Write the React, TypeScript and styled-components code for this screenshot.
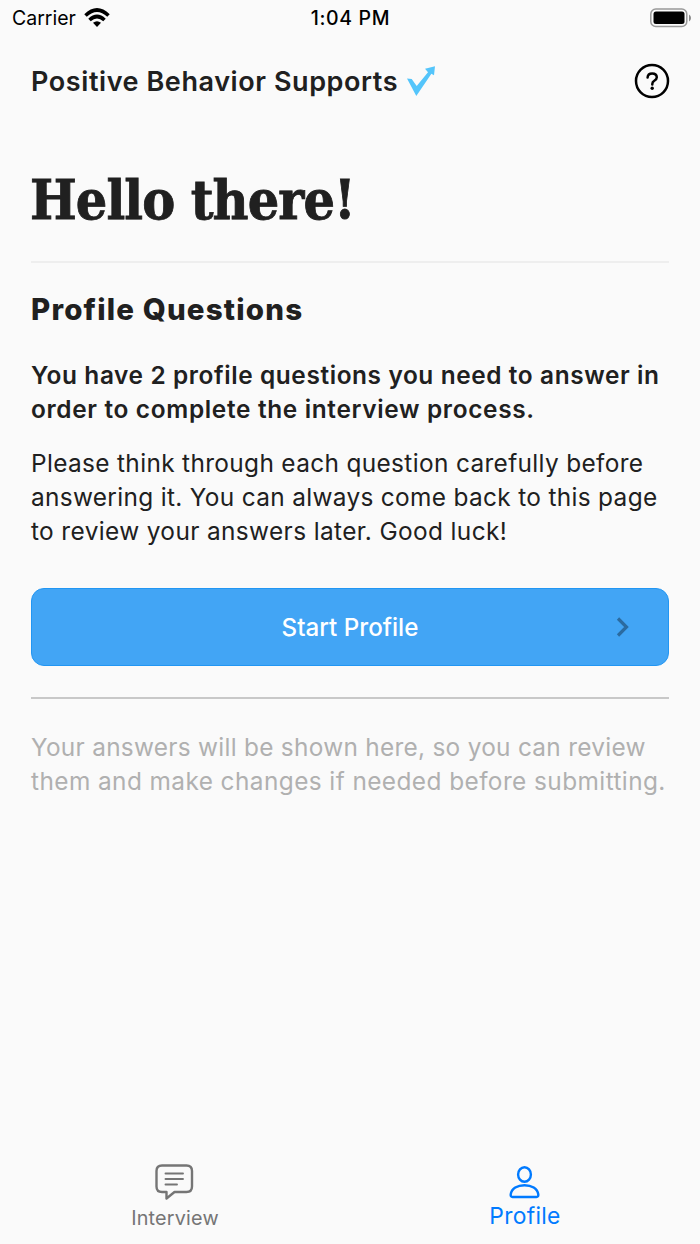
import React from 'react';
import styled, { createGlobalStyle } from 'styled-components';

const Global = createGlobalStyle`
  * { box-sizing: border-box; }
  body { margin: 0; background: #fafafa; font-family: Inter, sans-serif; color: #202020; }
  h1, h2, p { margin: 0; }
`;
const Screen = styled.div`
  width: 700px; height: 1244px; display: flex; flex-direction: column; background: #fafafa; overflow: hidden;
`;
const StatusBar = styled.div`
  height: 36px; flex: none; display: grid; grid-template-columns: 1fr auto 1fr; align-items: center;
  padding: 0 9px 0 12px; font-size: 19.5px; color: #000;
`;
const Carrier = styled.div`display: flex; align-items: center; gap: 8.5px;`;
const Time = styled.div`font-weight: 500; letter-spacing: 0.65px; margin-right: 2px;`;
const Battery = styled.svg`justify-self: end;`;
const Header = styled.header`
  height: 90px; flex: none; display: flex; align-items: center; padding: 0 30px 0 31px;
`;
const Brand = styled.div`padding-top: 2px; font-size: 27px; line-height: 34px; font-weight: 600; letter-spacing: 0.58px; white-space: nowrap;`;
const Check = styled.svg`margin-left: 9px;`;
const Help = styled.svg`margin-left: auto;`;
const Main = styled.main`flex: 1; display: flex; flex-direction: column; padding: 0 31px;`;
const Title = styled.h1`
  height: 135px; margin-left: -1px; padding-top: 38px; font: 700 55px/72px "DejaVu Serif Condensed", "DejaVu Serif", serif;
  font-stretch: condensed; letter-spacing: -0.9px; white-space: nowrap; -webkit-text-stroke: 0.8px #202020;
`;
const Rule = styled.div<{ $color: string }>`height: 2px; flex: none; background: ${p => p.$color};`;
const Heading = styled.h2`font-size: 29.5px; line-height: 36px; font-weight: 800; letter-spacing: 1.17px; margin: 28px 0 31px; white-space: nowrap;`;
const Text = styled.p<{ $weight?: number; $color?: string; $top?: number }>`
  font-size: 24.4px; line-height: 34px; white-space: nowrap; margin-top: ${p => p.$top ?? 0}px;
  font-weight: ${p => p.$weight ?? 400}; color: ${p => p.$color ?? '#202020'};
`;
const Line = styled.span<{ $spacing: number }>`display: block; letter-spacing: ${p => p.$spacing}px;`;
const Start = styled.button`
  height: 78px; margin: 40px 0 31px; border: 1.5px solid #2196f3; border-radius: 13px; background: #42a5f5;
  color: #fff; font: 500 24.2px/34px Inter, sans-serif; display: grid; grid-template-columns: 1fr auto 1fr; align-items: center; padding: 1px 38px 0;
`;
const Label = styled.span`grid-column: 2;`;
const Chevron = styled.svg`justify-self: end; margin-bottom: 2px;`;
const Tabs = styled.nav`height: 84px; flex: none; display: grid; grid-template-columns: 1fr 1fr;`;
const Tab = styled.div<{ $color: string }>`display: flex; flex-direction: column; align-items: center; color: ${p => p.$color};`;
const TabLabel = styled.span<{ $size: number; $spacing: number }>`
  font-size: ${p => p.$size}px; line-height: 28px; letter-spacing: ${p => p.$spacing}px;
`;

export default function App() {
  return (
    <Screen>
      <Global />
      <StatusBar>
        <Carrier>Carrier
          <svg width="26" height="20" viewBox="0 0 26 20" fill="none" stroke="#000" strokeWidth="3.6">
            <path d="M1.500 7.500Q13-3.500 24.500 7.500M5.500 12Q13 5 20.500 12" /><path d="M13 19l-4-4.200q4-3.200 8 0z" fill="#000" stroke="none" />
          </svg>
        </Carrier>
        <Time>1:04 PM</Time>
        <Battery width="41" height="20" viewBox="0 0 41 20">
          <rect x="0.800" y="1" width="36" height="17.500" rx="5" fill="none" stroke="#999" strokeWidth="1.500" />
          <rect x="3.500" y="3.500" width="31" height="12.500" rx="2.500" /><path d="M39 6.500q2 1 2 3.500t-2 3.500z" fill="#888" />
        </Battery>
      </StatusBar>
      <Header>
        <Brand>Positive Behavior Supports</Brand>
        <Check width="29" height="32" viewBox="0 0 29 32"><path d="M0 13.500L4.700 14L9.700 21L21 7.300L18 3.800L28 1.200L27 10.300L24.400 8.800L9.300 31Z" fill="#54c5fb" /></Check>
        <Help width="36" height="36" viewBox="0 0 36 36" fill="none" stroke="#000" strokeWidth="2.5" strokeLinecap="round">
          <circle cx="18" cy="18" r="16" /><path d="M13.600 14.500q.2-4 4.600-4t4.600 3.800q0 2-2.500 3.500-2 1.200-2 3.200v.5" /><circle cx="18.200" cy="25.200" r="1.700" fill="#000" stroke="none" />
        </Help>
      </Header>
      <Main>
        <Title>Hello there!</Title>
        <Rule $color="#eee" />
        <Heading>Profile Questions</Heading>
        <Text $weight={600}>
          <Line $spacing={0.61}>You have 2 profile questions you need to answer in</Line>
          <Line $spacing={0.67}>order to complete the interview process.</Line>
        </Text>
        <Text $top={20}>
          <Line $spacing={0.35}>Please think through each question carefully before</Line>
          <Line $spacing={0.33}>answering it. You can always come back to this page</Line>
          <Line $spacing={0.38}>to review your answers later. Good luck!</Line>
        </Text>
        <Start><Label>Start Profile</Label><Chevron width="14" height="20" viewBox="0 0 14 20" fill="none" stroke="#2b6ba0" strokeWidth="3.2"><path d="M2 1.500l8.500 8.500L2 18.500" /></Chevron></Start>
        <Rule $color="#c8c8c8" />
        <Text $color="#b0b0b0" $top={31}>
          <Line $spacing={0.28}>Your answers will be shown here, so you can review</Line>
          <Line $spacing={0.42}>them and make changes if needed before submitting.</Line>
        </Text>
      </Main>
      <Tabs>
        <Tab $color="#757575">
          <svg width="40" height="44" viewBox="0 0 40 44" fill="none" stroke="currentColor" strokeWidth="2.4" strokeLinejoin="round" strokeLinecap="round">
            <path d="M7 5.500H31.500q5.500 0 5.500 5.500V26.500q0 5.500-5.500 5.500H19.500L11.500 38.500V32H7Q1.500 32 1.500 26.500V11Q1.500 5.500 7 5.500Z" />
            <path strokeWidth="1.900" d="M10.500 13.500H28M10.500 19H28M10.500 24.500H22" />
          </svg>
          <TabLabel $size={19.8} $spacing={0.2}>Interview</TabLabel>
        </Tab>
        <Tab $color="#007aff">
          <svg width="40" height="42" viewBox="0 0 40 42" fill="none" stroke="currentColor" strokeWidth="2.4">
            <ellipse cx="19.500" cy="14.500" rx="6.400" ry="7.200" /><path d="M7.500 37H31.500Q33.500 37 33.300 34.500C32.500 28.500 26.500 25.200 19.500 25.200S6.500 28.500 5.700 34.500Q5.500 37 7.500 37Z" />
          </svg>
          <TabLabel $size={22.8} $spacing={0.3}>Profile</TabLabel>
        </Tab>
      </Tabs>
    </Screen>
  );
}
